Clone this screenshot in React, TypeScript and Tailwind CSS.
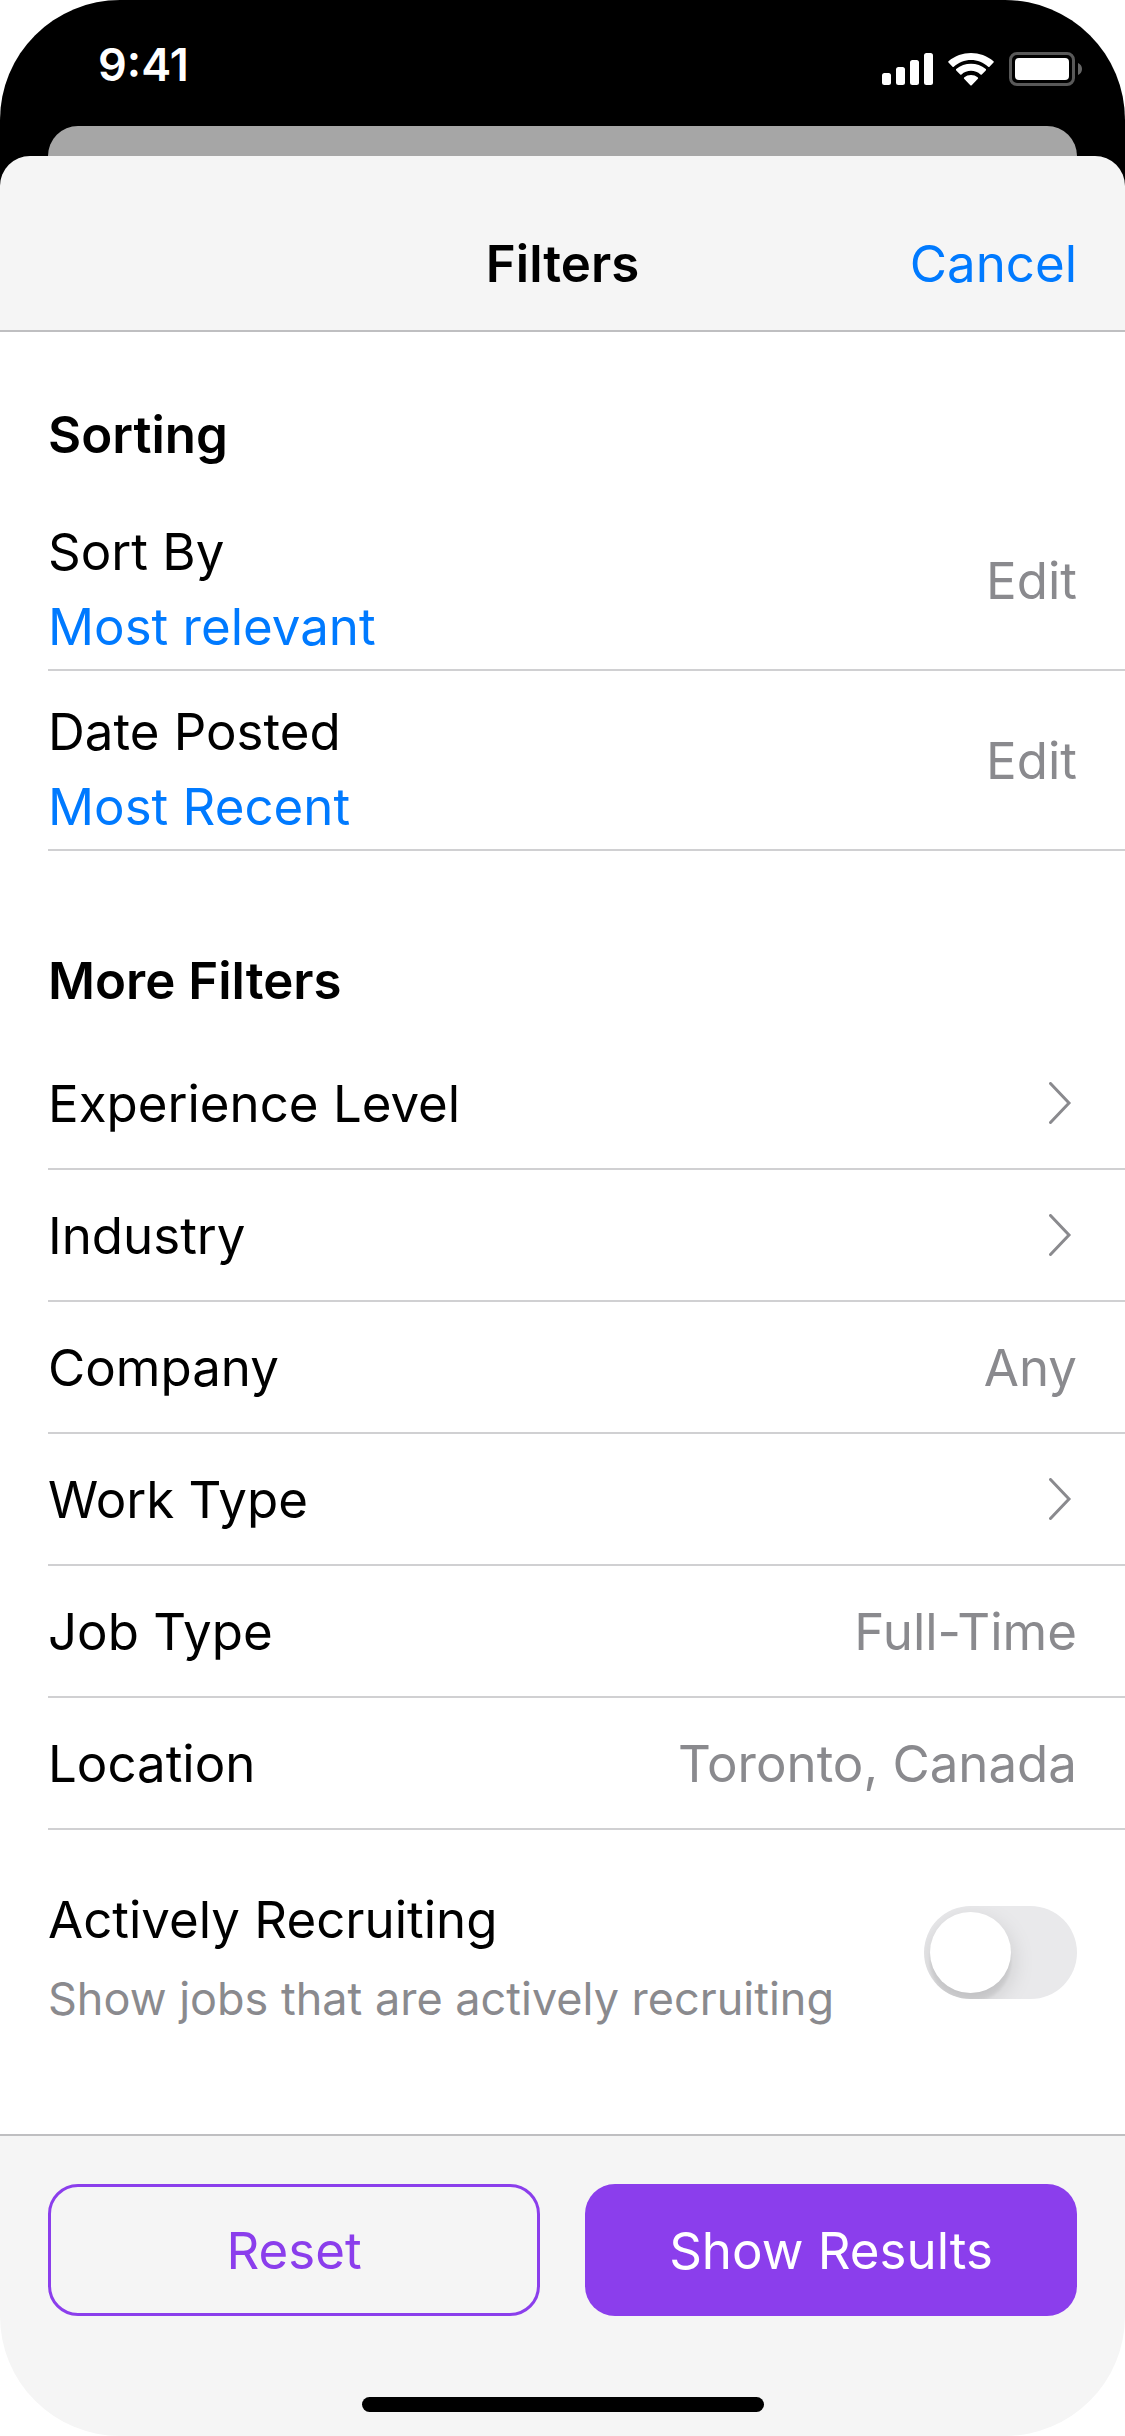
import { useState } from "react";

const sorting = [
  { id: "sort", label: "Sort By", value: "Most relevant" },
  { id: "date", label: "Date Posted", value: "Most Recent" },
];

const filters = [
  { id: "experience", label: "Experience Level", value: null },
  { id: "industry", label: "Industry", value: null },
  { id: "company", label: "Company", value: "Any" },
  { id: "work", label: "Work Type", value: null },
  { id: "job", label: "Job Type", value: "Full-Time" },
  { id: "location", label: "Location", value: "Toronto, Canada" },
];

function SignalIcon() {
  return (
    <svg width="51" height="32" viewBox="0 0 51 32" fill="currentColor" aria-hidden="true">
      <rect x="0" y="20" width="9" height="12" rx="2.5" />
      <rect x="14" y="14" width="9" height="18" rx="2.5" />
      <rect x="28" y="7" width="9" height="25" rx="2.5" />
      <rect x="42" y="0" width="9" height="32" rx="2.5" />
    </svg>
  );
}

function WifiIcon() {
  return (
    <svg width="46" height="33" viewBox="0 0 46 33" fill="currentColor" aria-hidden="true">
      <path d="M23 6.900c6.400 0 12.600 2.500 17.200 6.800.4.300.9.300 1.300 0l4-4.100c.4-.4.4-.900 0-1.300C32.800-2.700 13.200-2.700.5 8.300c-.4.400-.4.900 0 1.300l4 4.100c.4.300.9.300 1.300 0C10.400 9.400 16.600 6.900 23 6.900z" />
      <path d="M23 17.700c3.500 0 6.900 1.300 9.500 3.700.4.300.9.300 1.300 0l4-4c.4-.4.4-1 0-1.300-8.300-7.300-21.300-7.300-29.600 0-.4.300-.4.900 0 1.300l4 4c.4.300.9.300 1.300 0 2.600-2.400 6-3.700 9.500-3.700z" />
      <path d="M29.900 25.700c.4-.4.4-1 0-1.300-4-3.300-9.800-3.300-13.800 0-.4.300-.4.900 0 1.300l6.200 6.500c.4.400 1 .4 1.400 0z" />
    </svg>
  );
}

function BatteryIcon() {
  return (
    <svg width="73" height="34" viewBox="0 0 73 34" fill="none" aria-hidden="true">
      <rect x="1.500" y="1.500" width="63" height="31" rx="6.500" stroke="#fff" strokeOpacity=".35" strokeWidth="3" />
      <path d="M69 11v12c2.400-1 4-3.300 4-6s-1.600-5-4-6z" fill="#fff" fillOpacity=".4" />
      <rect x="6" y="6" width="54" height="22" rx="4" fill="#fff" />
    </svg>
  );
}

function Chevron() {
  return (
    <svg width="28" height="42" viewBox="0 0 28 42" fill="none" stroke="#8a8a8e" strokeWidth="3" strokeLinecap="round" aria-hidden="true">
      <path d="M1.500 1.500 20 21 1.500 40.500" />
    </svg>
  );
}

export default function App() {
  const [recruiting, setRecruiting] = useState(false);

  return (
    <div className="flex min-h-screen flex-col overflow-hidden rounded-[120px] bg-white font-['Inter',sans-serif] text-[51px] leading-[75px] text-black">
      {/* Status bar and the page behind the sheet */}
      <div className="bg-black">
        <div className="flex h-[126px] items-center justify-between pt-1 pr-[43px] pl-[98px] text-white">
          <span className="text-[45px] leading-[54px] font-semibold">9:41</span>
          <div className="flex items-center gap-[15px] pt-2">
            <SignalIcon />
            <WifiIcon />
            <BatteryIcon />
          </div>
        </div>
        <div className="mx-12 h-[30px] rounded-t-[30px] bg-[#a6a6a6]" />
        <header className="grid h-44 grid-cols-3 items-center rounded-t-[30px] border-b-2 border-[#bfbfc1] bg-[#f5f5f5] px-12 pt-10">
          <h1 className="col-start-2 text-center font-semibold">Filters</h1>
          <button type="button" className="justify-self-end text-[#007aff]">
            Cancel
          </button>
        </header>
      </div>

      <main className="flex-1 pl-12">
        <section className="pt-[65px]">
          <h2 className="font-semibold">Sorting</h2>
          <div className="pt-[19px]">
            {sorting.map((s) => (
              <div key={s.id} className="flex h-[180px] items-center justify-between border-b-2 border-[#d0d0d2] pr-12">
                <dl className="pt-[18px]">
                  <dt>{s.label}</dt>
                  <dd className="text-[#007aff]">{s.value}</dd>
                </dl>
                <button type="button" aria-label={`Edit ${s.label}`} className="text-[#8a8a8e]">
                  Edit
                </button>
              </div>
            ))}
          </div>
        </section>

        <section className="pt-[92px]">
          <h2 className="font-semibold">More Filters</h2>
          <div className="pt-5">
            {filters.map((f) => (
              <button
                key={f.id}
                type="button"
                className="flex h-[132px] w-full items-center justify-between border-b-2 border-[#d0d0d2] pr-12"
              >
                <span>{f.label}</span>
                {f.value ? <span className="text-[#8a8a8e]">{f.value}</span> : <Chevron />}
              </button>
            ))}
          </div>
        </section>

        <label className="flex items-center justify-between py-[52px] pr-12">
          <span className="flex flex-col gap-[18px]">
            <span>Actively Recruiting</span>
            <span className="text-[45px] leading-[48px] text-[#8a8a8e]">Show jobs that are actively recruiting</span>
          </span>
          <input
            type="checkbox"
            role="switch"
            checked={recruiting}
            onChange={(e) => setRecruiting(e.target.checked)}
            className="flex h-[93px] w-[153px] shrink-0 appearance-none items-center overflow-hidden rounded-full bg-[#e9e9eb] p-1.5 before:size-[81px] before:rounded-full before:bg-white before:shadow-[0_9px_24px_rgba(0,0,0,0.15),0_9px_3px_rgba(0,0,0,0.06)] checked:justify-end checked:bg-[#8b3eec]"
          />
        </label>
      </main>

      <footer className="border-t-2 border-[#bfbfc1] bg-[#f5f5f5] px-12 pt-12 pb-6">
        <div className="grid grid-cols-2 gap-[45px]">
          <button type="button" className="h-[132px] rounded-[30px] border-3 border-[#8b3eec] text-[#8b3eec]">
            Reset
          </button>
          <button type="button" className="h-[132px] rounded-[30px] bg-[#8b3eec] text-white">
            Show Results
          </button>
        </div>
        <div className="mx-auto mt-[81px] h-[15px] w-[402px] rounded-full bg-black" />
      </footer>
    </div>
  );
}
